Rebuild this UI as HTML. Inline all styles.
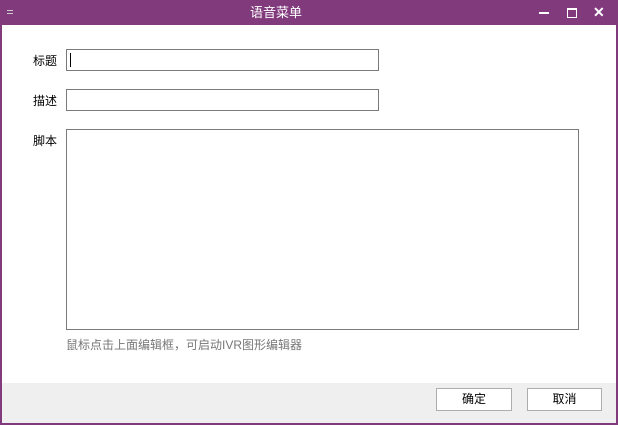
<!DOCTYPE html>
<html><head><meta charset="utf-8"><style>
*{margin:0;padding:0;box-sizing:border-box}
body{width:618px;height:425px;background:#813a7c;position:relative;overflow:hidden;font-family:"Liberation Sans","Noto Sans CJK SC",sans-serif;font-size:12px}
.t{position:absolute;left:250px;top:0;width:50px;height:25px;color:#fff;text-align:center;line-height:25px;font-size:13px;white-space:nowrap}
.main{position:absolute;left:2px;top:25px;width:614px;height:358px;background:#fff}
.foot{position:absolute;left:2px;top:383px;width:614px;height:40px;background:#efefef}
.lb{position:absolute;left:33px;color:#000;font-size:12px}
.in{position:absolute;border:1px solid #7a7a7a;background:#fff}
.btn{position:absolute;top:388px;height:23px;border:1px solid #adadad;background:#fff;text-align:center;line-height:21px;font-size:12px;color:#000}
</style></head><body>
<div class="t">语音菜单</div>
<div style="position:absolute;left:7px;top:10px;width:6px;height:1px;background:#ccc"></div>
<div style="position:absolute;left:7px;top:13px;width:6px;height:1px;background:#ccc"></div>
<div style="position:absolute;left:539px;top:12px;width:10px;height:2px;background:#fff"></div>
<div style="position:absolute;left:567px;top:8px;width:10px;height:10px;border:1px solid #fff;border-top-width:2px"></div>
<div style="position:absolute;left:593px;top:4px;color:#fff;font-size:14px;font-weight:bold">✕</div>
<div class="main"></div>
<div class="foot"></div>
<div class="lb" style="top:52px">标题</div>
<div class="in" style="left:66px;top:49px;width:313px;height:22px"><div style="position:absolute;left:3px;top:3px;width:1px;height:14px;background:#000"></div></div>
<div class="lb" style="top:92px">描述</div>
<div class="in" style="left:66px;top:89px;width:313px;height:22px"></div>
<div class="lb" style="top:132px">脚本</div>
<div class="in" style="left:66px;top:129px;width:513px;height:201px"></div>
<div style="position:absolute;left:66px;top:336px;color:#777;font-size:12px">鼠标点击上面编辑框，可启动IVR图形编辑器</div>
<div class="btn" style="left:436px;width:76px">确定</div>
<div class="btn" style="left:527px;width:75px">取消</div>
</body></html>
